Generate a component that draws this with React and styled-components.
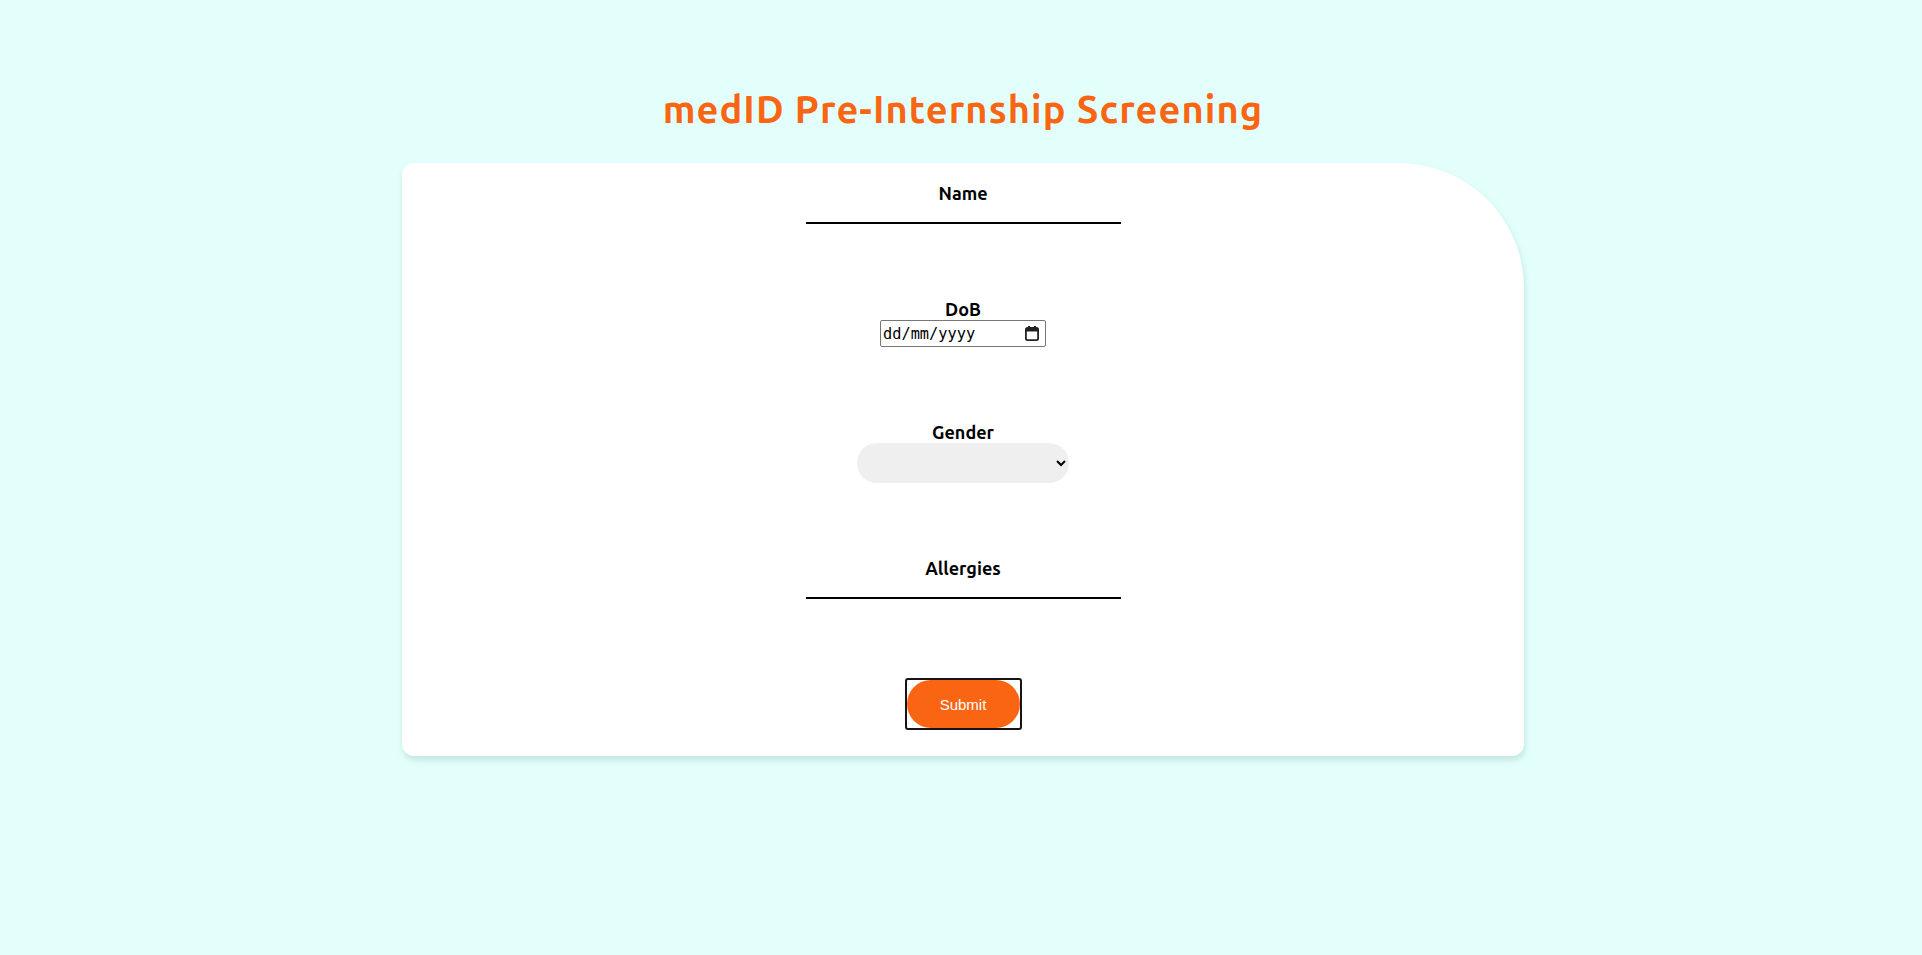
import styled, { createGlobalStyle } from "styled-components";

const GlobalStyle = createGlobalStyle`
  html, body {
    margin: 0;
    padding: 0;
    background: #e3fffb;
  }
  body {
    font-family: Ubuntu, "Noto Sans", "DejaVu Sans", sans-serif;
  }
`;

const Page = styled.div`
  min-height: 955px;
  display: flex;
  flex-direction: column;
  align-items: center;
  background: #e3fffb;
`;

const Title = styled.h1`
  margin: 86px 0 31px;
  font-size: 38px;
  line-height: 46px;
  font-weight: 700;
  letter-spacing: 1.1px;
  color: #f96513;
  transform: translateX(2px);
`;

const Card = styled.form`
  width: 1122px;
  box-sizing: border-box;
  margin-left: 4px;
  padding: 20px 0 26px;
  background: #fff;
  border-radius: 12px 125px 12px 12px;
  box-shadow: 1px 4px 6px rgba(40, 110, 100, 0.18);
  display: flex;
  flex-direction: column;
  align-items: center;
  gap: 75px;
`;

const Field = styled.label`
  display: flex;
  flex-direction: column;
  align-items: center;
`;

const Label = styled.span`
  font-size: 18px;
  line-height: 21px;
  font-weight: 700;
  color: #000;
`;

const LineInput = styled.input`
  width: 315px;
  height: 20px;
  box-sizing: border-box;
  border: none;
  border-bottom: 2px solid #000;
  background: transparent;
  outline: none;
  font: 16px "Noto Sans", sans-serif;
`;

const DateBox = styled.div`
  width: 166px;
  height: 27px;
  box-sizing: border-box;
  border: 1px solid #767676;
  border-radius: 2px;
  padding: 0 6px 0 2px;
  display: flex;
  align-items: center;
  background: #fff;
`;

const DateText = styled.input`
  flex: 1;
  min-width: 0;
  border: none;
  outline: none;
  padding: 0;
  background: transparent;
  font: 15.3px "DejaVu Sans Mono", monospace;
  color: #000;

  &::placeholder {
    color: #000;
    opacity: 1;
  }
`;

const Select = styled.select`
  width: 212px;
  height: 40px;
  border: none;
  border-radius: 20px;
  background: #efefef;
  padding: 0 10px;
  font: 15px "Noto Sans", sans-serif;
`;

const SubmitFrame = styled.div`
  margin-top: 4px;
  border: 2px solid #151515;
  border-radius: 3px;
  padding: 0;
  display: flex;
`;

const SubmitButton = styled.button`
  width: 113px;
  height: 48px;
  border: none;
  border-radius: 24px;
  background: #f96513;
  color: #fff;
  font: 15px "Liberation Sans", Arial, sans-serif;
  cursor: pointer;
`;

function CalendarIcon() {
  return (
    <svg width="14" height="15" viewBox="0 0 14 15" aria-hidden="true">
      <rect x="3" y="0" width="2" height="3" fill="#222" />
      <rect x="9" y="0" width="2" height="3" fill="#222" />
      <rect x="0.9" y="1.9" width="12.2" height="12.2" rx="1.6" fill="none" stroke="#222" strokeWidth="1.8" />
      <rect x="1" y="2" width="12" height="3.5" fill="#222" />
    </svg>
  );
}

export default function App() {
  return (
    <Page>
      <GlobalStyle />
      <Title>medID Pre-Internship Screening</Title>
      <Card onSubmit={(e) => e.preventDefault()}>
        <Field>
          <Label>Name</Label>
          <LineInput type="text" />
        </Field>
        <Field>
          <Label>DoB</Label>
          <DateBox>
            <DateText type="text" placeholder="dd/mm/yyyy" />
            <CalendarIcon />
          </DateBox>
        </Field>
        <Field>
          <Label>Gender</Label>
          <Select defaultValue="">
            <option value=""></option>
            <option value="male">Male</option>
            <option value="female">Female</option>
            <option value="other">Other</option>
          </Select>
        </Field>
        <Field>
          <Label>Allergies</Label>
          <LineInput type="text" />
        </Field>
        <SubmitFrame>
          <SubmitButton type="submit">Submit</SubmitButton>
        </SubmitFrame>
      </Card>
    </Page>
  );
}
